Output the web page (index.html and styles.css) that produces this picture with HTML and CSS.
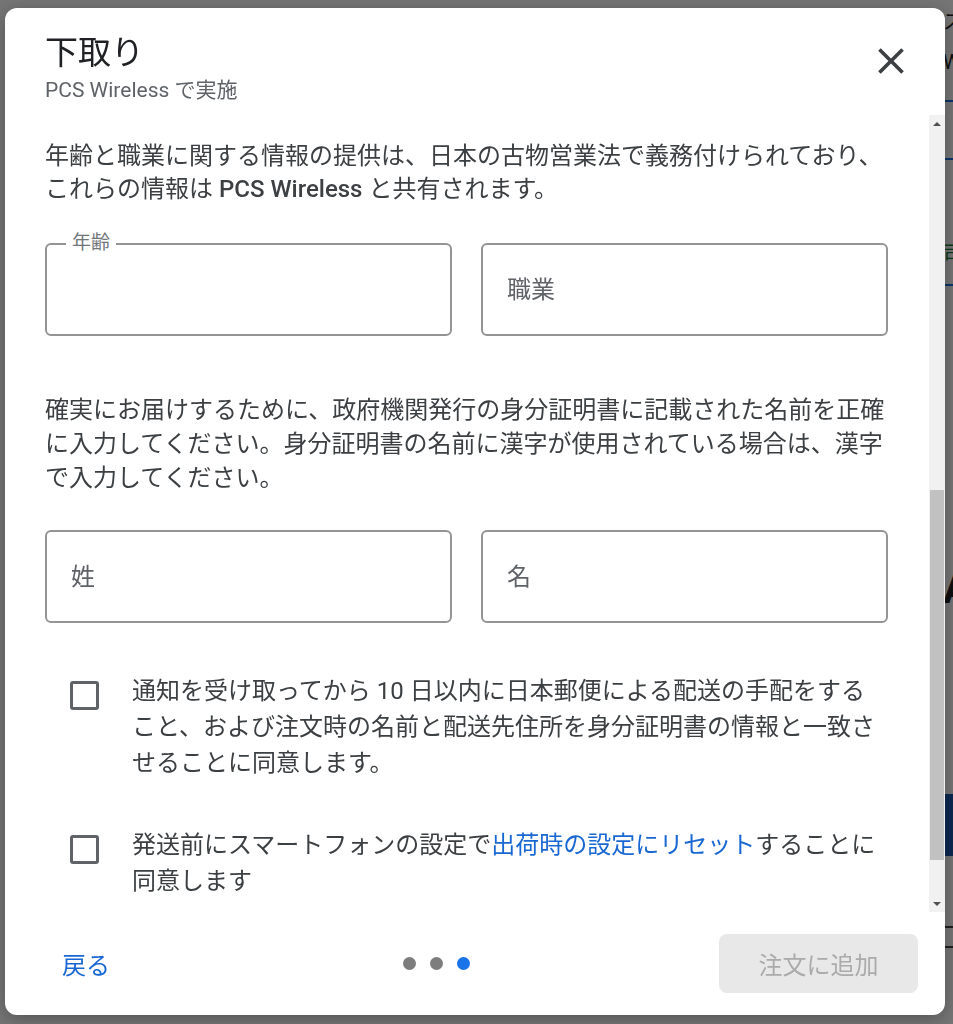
FILE: index.html
```html
<!DOCTYPE html>
<html lang="ja">
<head>
<meta charset="UTF-8" />
<meta name="viewport" content="width=device-width, initial-scale=1" />
<title>下取り</title>
<link rel="stylesheet" href="styles.css">
</head>
<body>
<div class="page" aria-hidden="true">
  <div class="page-edge">
    <span class="pe-text">ス</span>
    <span class="pe-text pe-latin">W</span>
    <div class="pe-rule"></div>
    <div class="pe-rule pe-rule-2"></div>
    <span class="pe-text pe-green">司</span>
    <div class="pe-rule pe-rule-3"></div>
    <span class="pe-text pe-big">A</span>
    <div class="pe-block"></div>
    <div class="pe-line"></div>
    <div class="pe-line pe-line-2"></div>
  </div>
</div>
<div class="backdrop"></div>

<div class="dialog" role="dialog" aria-labelledby="dlgTitle">
  <header class="dlg-head">
    <div>
      <h2 class="dlg-title" id="dlgTitle">下取り</h2>
      <p class="dlg-sub">PCS Wireless で実施</p>
    </div>
    <button class="close-btn" aria-label="閉じる">
      <svg viewBox="0 0 24 24" width="44" height="44"><path d="M19 6.41L17.59 5 12 10.59 6.41 5 5 6.41 10.59 12 5 17.59 6.41 19 12 13.41 17.59 19 19 17.59 13.41 12z" fill="currentColor"/></svg>
    </button>
  </header>

  <div class="dlg-body">
    <div class="dlg-content">
      <p class="note">年齢と職業に関する情報の提供は、日本の古物営業法で義務付けられており、これらの情報は <strong>PCS Wireless</strong> と共有されます。</p>

      <div class="field-row">
        <label class="field">
          <span class="field-label">年齢</span>
          <input type="text" />
        </label>
        <label class="field">
          <input type="text" placeholder="職業" />
        </label>
      </div>

      <p class="note note-name">確実にお届けするために、政府機関発行の身分証明書に記載された名前を正確に入力してください。身分証明書の名前に漢字が使用されている場合は、漢字で入力してください。</p>

      <div class="field-row field-row-name">
        <label class="field"><input type="text" placeholder="姓" /></label>
        <label class="field"><input type="text" placeholder="名" /></label>
      </div>

      <label class="check-row">
        <span class="check-box"></span>
        <span class="check-text">通知を受け取ってから 10 日以内に日本郵便による配送の手配をすること、および注文時の名前と配送先住所を身分証明書の情報と一致させることに同意します。</span>
      </label>

      <label class="check-row check-row-2">
        <span class="check-box"></span>
        <span class="check-text">発送前にスマートフォンの設定で<a href="#">出荷時の設定にリセット</a>することに同意します</span>
      </label>
    </div>

    <div class="scrollbar" aria-hidden="true">
      <span class="sb-arrow sb-up"></span>
      <div class="sb-track"><div class="sb-thumb"></div></div>
      <span class="sb-arrow sb-down"></span>
    </div>
  </div>

  <footer class="dlg-foot">
    <a href="#" class="back-link">戻る</a>
    <div class="steps">
      <span class="dot"></span>
      <span class="dot"></span>
      <span class="dot active"></span>
    </div>
    <button class="add-btn" disabled>注文に追加</button>
  </footer>
</div>
</body>
</html>
```

FILE: styles.css
```css
html, body {
  margin: 0;
  padding: 0;
  height: 100%;
  overflow: hidden;
  font-family: Roboto, "Noto Sans CJK JP", sans-serif;
  background: #fff;
  color: #3c4043;
}

/* page behind the dialog, only its right edge peeks out */
.page-edge {
  display: flex;
  flex-direction: column;
  align-items: flex-start;
  padding: 8px 0 0 943px;
  color: #202124;
}
.pe-text {
  font-size: 20px;
  line-height: 28px;
}
.pe-latin { margin-top: 12px; }
.pe-rule {
  width: 20px;
  height: 2px;
  background: #1a73e8;
  margin-top: 24px;
}
.pe-rule-2 { margin-top: 56px; }
.pe-green {
  color: #188038;
  margin-top: 80px;
}
.pe-rule-3 { margin-top: 16px; }
.pe-big {
  font-size: 40px;
  line-height: 48px;
  margin-top: 280px;
  font-weight: 700;
}
.pe-block {
  width: 20px;
  height: 62px;
  background: #1a56b0;
  margin-top: 180px;
}
.pe-line {
  width: 20px;
  height: 2px;
  background: #444;
  margin-top: 70px;
}
.pe-line-2 { margin-top: 18px; }

.backdrop {
  position: fixed;
  inset: 0;
  background: rgba(0, 0, 0, 0.54);
}

.dialog {
  position: fixed;
  left: 5px;
  top: 8px;
  width: 940px;
  height: 1007px;
  background: #fff;
  border-radius: 12px;
  box-shadow: 0 4px 18px rgba(0, 0, 0, 0.3);
  display: flex;
  flex-direction: column;
  overflow: hidden;
}

.dlg-head {
  display: flex;
  justify-content: space-between;
  align-items: flex-start;
  padding: 25px 32px 12px 40px;
}
.dlg-title {
  margin: 0;
  font-size: 33px;
  line-height: 40px;
  font-weight: 400;
  color: #202124;
}
.dlg-sub {
  margin: 4px 0 0;
  font-size: 21px;
  line-height: 26px;
  color: #5f6368;
}
.close-btn {
  margin-top: 6px;
  padding: 0;
  border: none;
  background: none;
  color: #3c4043;
  cursor: pointer;
  display: flex;
}

.dlg-body {
  flex: 1;
  display: flex;
  min-height: 0;
}
.dlg-content {
  flex: 1;
  padding: 25px 41px 13px 40px;
  overflow: hidden;
}

.note {
  margin: 0;
  font-size: 24px;
  line-height: 33px;
}
.note strong { font-weight: 500; }
.note-name {
  margin-top: 57px;
  line-height: 34px;
}

.field-row {
  display: grid;
  grid-template-columns: 1fr 1fr;
  gap: 29px;
  margin-top: 37px;
}
.field-row-name { margin-top: 35px; }
.field {
  position: relative;
  display: block;
}
.field input {
  display: block;
  width: 100%;
  height: 93px;
  box-sizing: border-box;
  border: 2px solid #949494;
  border-radius: 6px;
  padding: 0 24px;
  font: inherit;
  font-size: 24px;
  color: #202124;
  background: #fff;
  outline: none;
}
.field input::placeholder { color: #5f6368; }
.field-label {
  position: absolute;
  left: 21px;
  top: -12px;
  padding: 0 6px;
  background: #fff;
  font-size: 19px;
  line-height: 24px;
  color: #70757a;
}

.check-row {
  display: flex;
  align-items: flex-start;
  gap: 33px;
  margin-top: 50px;
  padding-left: 25px;
  font-size: 24px;
  line-height: 36px;
  cursor: pointer;
}
.check-row-2 { margin-top: 46px; }
.check-box {
  flex: none;
  width: 29px;
  height: 29px;
  box-sizing: border-box;
  border: 3px solid #5f6368;
  border-radius: 3px;
  margin-top: 8px;
}
.check-text a {
  color: #1967d2;
  text-decoration: none;
}

.scrollbar {
  width: 16px;
  background: #f1f1f1;
  display: flex;
  flex-direction: column;
  align-items: center;
}
.sb-arrow {
  width: 0;
  height: 0;
  border-left: 4px solid transparent;
  border-right: 4px solid transparent;
  margin: 7px 0 6px;
}
.sb-up { border-bottom: 4px solid #505050; }
.sb-down { border-top: 4px solid #505050; }
.sb-track {
  flex: 1;
  width: 100%;
  display: flex;
  flex-direction: column;
}
.sb-thumb {
  margin: 358px 1px 0;
  height: 370px;
  background: #c1c1c1;
}

.dlg-foot {
  height: 103px;
  flex: none;
  display: flex;
  align-items: center;
  padding: 0 27px 0 57px;
}
.back-link {
  color: #1967d2;
  font-size: 24px;
  text-decoration: none;
}
.steps {
  display: flex;
  gap: 14px;
  margin-left: 293px;
}
.dot {
  width: 13px;
  height: 13px;
  border-radius: 50%;
  background: #7d7d7d;
}
.dot.active { background: #1a73e8; }
.add-btn {
  margin-left: auto;
  width: 199px;
  height: 59px;
  border: none;
  border-radius: 8px;
  background: #e8e8e8;
  color: #ababab;
  font: inherit;
  font-size: 24px;
}
```
